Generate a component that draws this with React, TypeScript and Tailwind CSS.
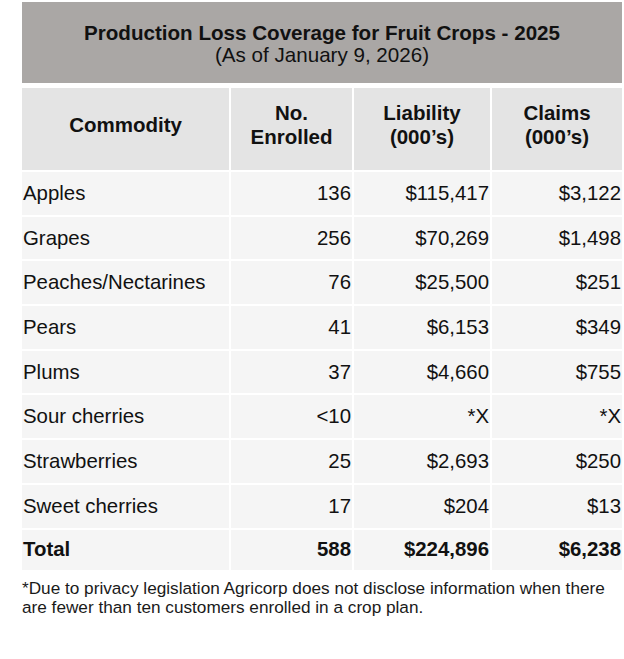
import React from "react";

const rows: [string, string, string, string][] = [
  ["Apples", "136", "$115,417", "$3,122"],
  ["Grapes", "256", "$70,269", "$1,498"],
  ["Peaches/Nectarines", "76", "$25,500", "$251"],
  ["Pears", "41", "$6,153", "$349"],
  ["Plums", "37", "$4,660", "$755"],
  ["Sour cherries", "<10", "*X", "*X"],
  ["Strawberries", "25", "$2,693", "$250"],
  ["Sweet cherries", "17", "$204", "$13"],
];

export default function App() {
  const font = { fontFamily: '"Liberation Sans", Arial, sans-serif' };
  const head =
    "h-[82px] bg-[#e4e4e4] flex items-center justify-center pb-[8px] text-[20.5px] leading-[24px] font-bold text-center";
  const left = "h-[42.7px] bg-[#f5f5f5] flex items-center pl-[1px] text-[20.4px]";
  const right = "h-[42.7px] bg-[#f5f5f5] flex items-center justify-end pr-[1px] text-[20.4px]";
  const tleft = "h-[40px] bg-[#f5f5f5] flex items-center pl-[1px] text-[20.4px] font-bold";
  const tright = "h-[40px] bg-[#f5f5f5] flex items-center justify-end pr-[1px] text-[20.4px] font-bold";
  return (
    <div className="w-[624px] h-[659px] bg-white text-[#111]" style={font}>
      <div className="ml-[22px] pt-[2px] w-[600px]">
        <div className="h-[81px] bg-[#aaa7a5] flex flex-col items-center justify-center pt-[2px]">
          <div className="text-[20.6px] leading-[22px] font-bold">
            Production Loss Coverage for Fruit Crops - 2025
          </div>
          <div className="text-[20.6px] leading-[22px]">(As of January 9, 2026)</div>
        </div>
        <div className="mt-[5px] grid grid-cols-[207px_121px_136px_130px] gap-x-[2px] gap-y-[2px]">
          <div className={head}>Commodity</div>
          <div className={head}>
            No.
            <br />
            Enrolled
          </div>
          <div className={head}>
            Liability
            <br />
            (000’s)
          </div>
          <div className={head}>
            Claims
            <br />
            (000’s)
          </div>
          {rows.map((r) => (
            <React.Fragment key={r[0]}>
              <div className={left}>{r[0]}</div>
              <div className={right}>{r[1]}</div>
              <div className={right}>{r[2]}</div>
              <div className={right}>{r[3]}</div>
            </React.Fragment>
          ))}
          <div className={tleft}>Total</div>
          <div className={tright}>588</div>
          <div className={tright}>$224,896</div>
          <div className={tright}>$6,238</div>
        </div>
        <div className="pt-[9px] text-[17.2px] leading-[19px] text-[#1a1a1a]">
          *Due to privacy legislation Agricorp does not disclose information when there
          <br />
          are fewer than ten customers enrolled in a crop plan.
        </div>
      </div>
    </div>
  );
}
